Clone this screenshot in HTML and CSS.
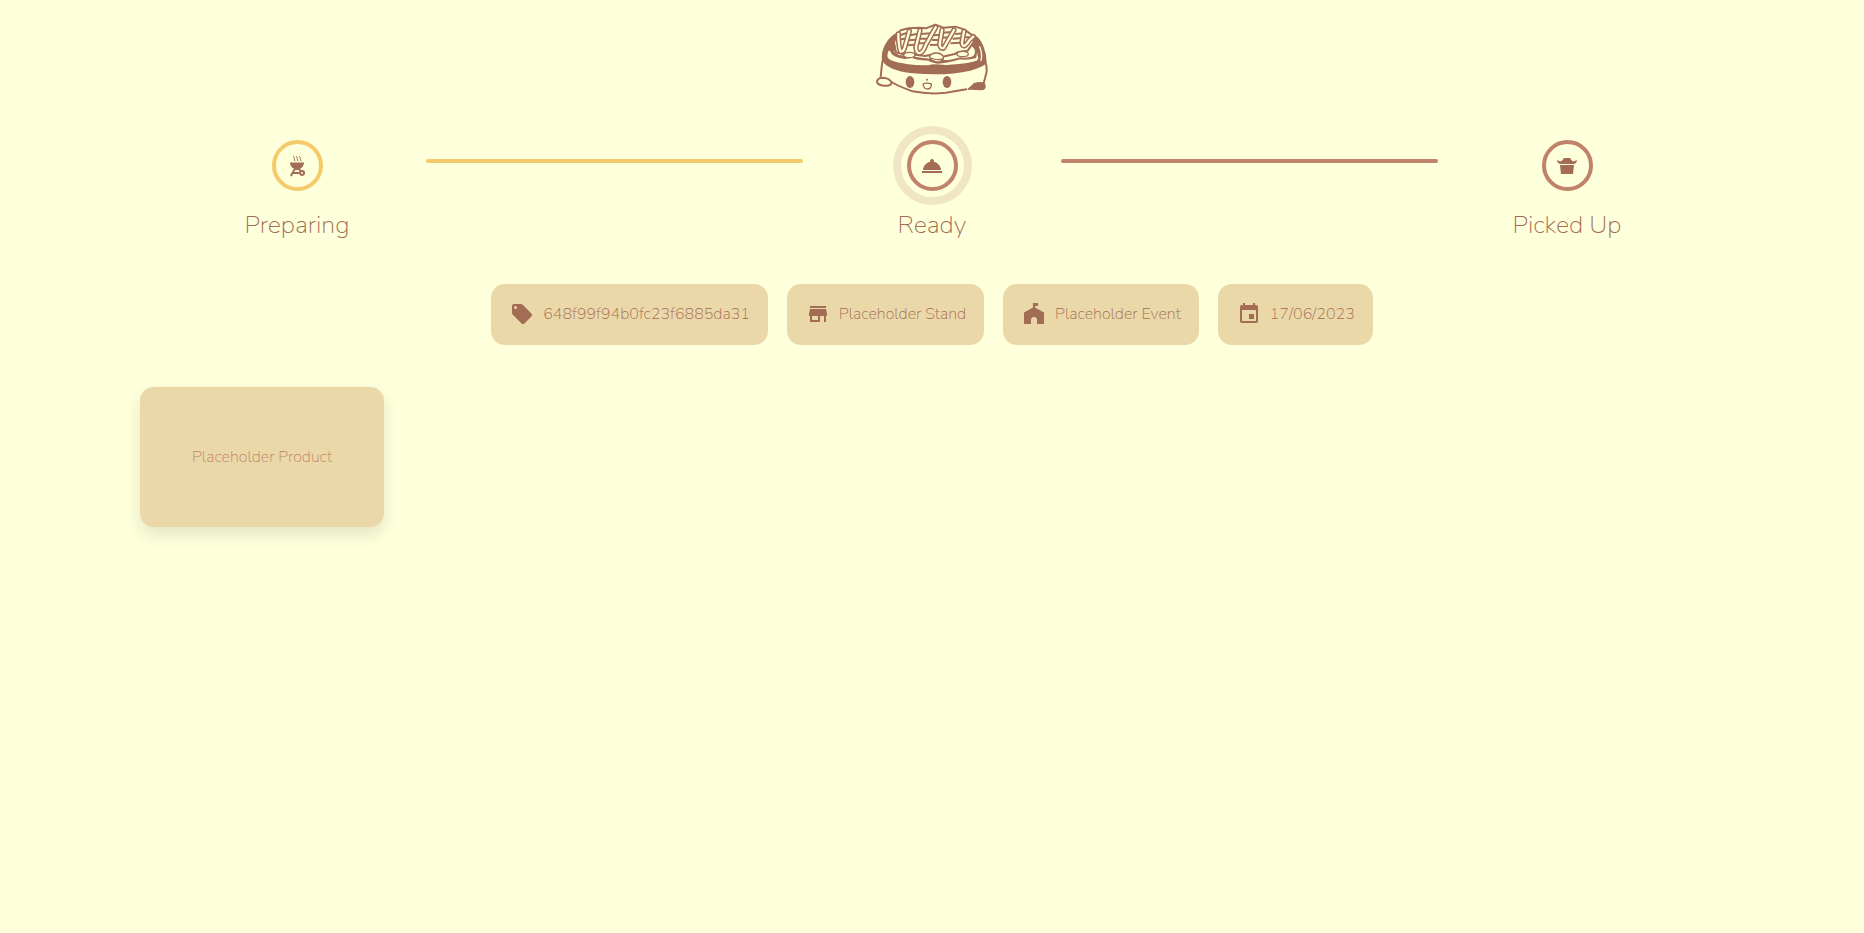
FILE: index.html
```html
<!DOCTYPE html>
<html lang="en">
<head>
<meta charset="utf-8">
<meta name="viewport" content="width=device-width, initial-scale=1">
<title>Order status</title>
<link rel="stylesheet" href="styles.css">
</head>
<body>
<header class="header">
  <svg class="logo" viewBox="30 33 336 216" role="img" aria-label="Okonomiyaki mascot">
    <g class="logo-line">
      <path d="M52 138C46 155 47 178 43 200M76 210Q100 224 140 238Q190 248 240 242L301 232M309 231L326 216M358 150C368 175 358 190 353 215"/>
      <path class="logo-fill" d="M92 66C66 80 50 110 50 138C52 162 95 176 140 181C200 186 265 184 312 173C340 165 355 158 359 150C359 122 345 82 325 72L318 98L328 110C334 128 326 140 300 141Q240 154 150 138L98 132L82 122L86 96Z"/>
      <path class="logo-cream" d="M66 112C59 128 58 141 72 147C98 158 150 165 190 162C210 154 228 166 250 161C290 158 315 156 334 148C345 140 338 122 331 112L328 136Q305 142 281 139Q240 152 215 152Q195 150 188 143Q150 142 138 134L116 138Q78 132 78 116Z"/>
      <path class="logo-cream" d="M84 92L92 67L104 55L128 49L160 47L180 49L208 38L232 47L268 44L294 52L325 74L322 92L305 116L278 120L266 126L230 134L208 125L178 132L149 128L112 127L90 121Z"/>
      <path d="M78 92Q66 124 94 131M332 92Q344 112 337 130"/>
      <path d="M106 68L120 64M106 82L116 80M132 70L152 66M128 85L148 83M124 100L146 98M164 66L196 64M160 80L190 80M158 94L184 94M206 70L224 68M200 84L222 84M194 99L220 98M232 62L254 60M230 77L246 76M270 66L292 64M262 80L288 78M256 94L284 92M300 76L310 76"/>
    </g>
    <g class="logo-sauce-edge">
      <path d="M97 66C97 88 99 106 104 119Q112 120 116 107L130 57M162 55L150 104Q150 125 162 123Q172 120 180 97L209 46M228 54L221 98Q224 112 233 108L264 54M294 58L288 91Q288 103 296 101Q304 96 310 85L322 74"/>
    </g>
    <g class="logo-sauce">
      <path d="M97 66C97 88 99 106 104 119Q112 120 116 107L130 57M162 55L150 104Q150 125 162 123Q172 120 180 97L209 46M228 54L221 98Q224 112 233 108L264 54M294 58L288 91Q288 103 296 101Q304 96 310 85L322 74"/>
    </g>
    <g class="logo-rim">
      <path d="M341 104Q350 126 345 146"/>
    </g>
    <g class="logo-egg">
      <ellipse cx="130" cy="129" rx="17" ry="8"/>
      <path d="M190 134Q196 122 214 123Q234 126 232 140Q228 150 212 150Q193 146 190 134Z"/>
      <ellipse cx="290" cy="126" rx="17" ry="8"/>
      <path d="M194 138Q212 146 230 141"/>
      <path class="logo-paw" d="M33 208Q35 198 50 197Q70 198 76 210Q78 220 64 221Q34 222 33 208Z"/>
      <path d="M171 216Q182 211 196 216Q197 231 184 231Q173 231 171 216Z"/>
    </g>
    <ellipse class="logo-solid" cx="132" cy="210" rx="13" ry="18"/>
    <ellipse class="logo-solid" cx="243" cy="210" rx="13" ry="18"/>
    <circle class="logo-solid" cx="183" cy="203" r="3"/>
    <path class="logo-solid" d="M305 232L318 222L324 213Q340 208 352 211Q360 216 359 226Q358 234 347 235L325 234Z"/>
  </svg>
</header>

<main class="page">
  <ol class="steps">
    <li class="step step-done">
      <span class="step-circle">
        <svg class="step-icon" viewBox="0 0 24 24" aria-hidden="true"><path d="M17 22a3 3 0 1 0-2.800-4H9.100l1.300-2.100h3.200l.9 1.400 1.600-1.100-.9-1.400C17.400 13.500 19 11.400 19 8.500H5c0 2.900 1.600 5.100 3.900 6.100L5.300 21a1 1 0 0 0 1.700 1l1.200-2h6A3 3 0 0 0 17 22zm0-4a1 1 0 1 1 0 2 1 1 0 0 1 0-2z"/><path class="steam" d="M8 2.200q1.800 1 1.300 2.500t1.200 2.600M11 2.200q1.800 1 1.300 2.500t1.200 2.600M14 2.200q1.800 1 1.300 2.500t1.200 2.600"/></svg>
      </span>
      <span class="step-label">Preparing</span>
    </li>
    <li class="bar bar-done" aria-hidden="true"></li>
    <li class="step step-current" aria-current="step">
      <span class="step-circle">
        <svg class="step-icon" viewBox="0 0 24 24" aria-hidden="true"><path d="M2 17h20v2H2zM13.840 7.790A2 2 0 1 0 10.160 7.790C6.250 8.600 3.270 11.930 3 16h18c-.270-4.070-3.250-7.400-7.160-8.210z"/></svg>
      </span>
      <span class="step-label">Ready</span>
    </li>
    <li class="bar" aria-hidden="true"></li>
    <li class="step">
      <span class="step-circle">
        <svg class="step-icon" viewBox="0 0 24 24" aria-hidden="true"><path d="M5 11h14l-1 9H6zM2.500 6l2 1.200h2L9 4h6l2.500 3.200h2l2-1.200.5 1.500-2.500 2.500H4.500L2 7.500z"/></svg>
      </span>
      <span class="step-label">Picked Up</span>
    </li>
  </ol>

  <ul class="chips">
    <li class="chip">
      <svg class="chip-icon" viewBox="0 0 24 24" aria-hidden="true"><path d="M21.410 11.580l-9-9A2 2 0 0 0 11 2H4a2 2 0 0 0-2 2v7c0 .550.220 1.050.590 1.420l9 9a2 2 0 0 0 2.820 0l7-7a2 2 0 0 0 0-2.840zM5.500 7a1.500 1.500 0 1 1 0-3 1.500 1.500 0 0 1 0 3z"/></svg>
      <span>648f99f94b0fc23f6885da31</span>
    </li>
    <li class="chip">
      <svg class="chip-icon" viewBox="0 0 24 24" aria-hidden="true"><path d="M20 4H4v2h16zM21 14v-2l-1-5H4l-1 5v2h1v6h10v-6h4v6h2v-6zM12 18H6v-4h6z"/></svg>
      <span>Placeholder Stand</span>
    </li>
    <li class="chip">
      <svg class="chip-icon" viewBox="0 0 24 24" aria-hidden="true"><path d="M13 5.500V4h3V1h-5v4.500L2 10.500V22h7v-4a3 3 0 0 1 6 0v4h7V10.500z"/></svg>
      <span>Placeholder Event</span>
    </li>
    <li class="chip">
      <svg class="chip-icon" viewBox="0 0 24 24" aria-hidden="true"><path d="M17 12h-5v5h5zM16 1v2H8V1H6v2H5a2 2 0 0 0-2 2v14a2 2 0 0 0 2 2h14a2 2 0 0 0 2-2V5a2 2 0 0 0-2-2h-1V1zM19 19H5V8h14z"/></svg>
      <span>17/06/2023</span>
    </li>
  </ul>

  <section class="products">
    <article class="product">Placeholder Product</article>
  </section>
</main>
</body>
</html>
```
FILE: styles.css
```css
:root {
  --cream: #feffdb;
  --sand: #ebd8a9;
  --brown: #a26c55;
  --clay: #c08269;
  --gold: #f3cb6b;
}

* {
  box-sizing: border-box;
}

body {
  margin: 0;
  min-height: 100vh;
  background: var(--cream);
  color: var(--brown);
  font-family: Nunito, Lato, "Open Sans", sans-serif;
  font-size: 16px;
  font-weight: 200;
  line-height: 24px;
}

ol,
ul {
  margin: 0;
  padding: 0;
  list-style: none;
}

svg {
  display: block;
  fill: var(--brown);
}

.header {
  display: flex;
  justify-content: center;
  padding-top: 23px;
}

.logo {
  width: 112px;
  height: 72px;
  overflow: visible;
}

.logo-line,
.logo-sauce-edge,
.logo-sauce,
.logo-rim,
.logo-egg {
  fill: none;
  stroke: var(--brown);
  stroke-width: 6;
  stroke-linecap: round;
  stroke-linejoin: round;
}

.logo-fill,
.logo-solid {
  fill: var(--brown);
}

.logo-cream {
  fill: var(--cream);
}

.logo-sauce-edge {
  stroke-width: 16;
}

.logo-sauce {
  stroke: var(--cream);
  stroke-width: 7;
}

.logo-rim {
  stroke: var(--cream);
  stroke-width: 4;
}

.logo-egg {
  fill: var(--cream);
  stroke-width: 4;
}

.logo-paw {
  stroke-width: 6;
}

.page {
  padding: 45px 140px;
}

.steps {
  display: grid;
  grid-template-columns: 258fr 377fr 258fr 377fr 258fr;
  padding: 0 28px;
}

.step {
  display: flex;
  flex-direction: column;
  align-items: center;
  gap: 16px;
}

.step-circle {
  display: grid;
  place-items: center;
  width: 51px;
  height: 51px;
  border: 4px solid var(--clay);
  border-radius: 50%;
}

.step-done .step-circle {
  border-color: var(--gold);
}

.step-current .step-circle {
  outline: 8px solid #f0e5c4;
  outline-offset: 6px;
}

.step-icon {
  width: 24px;
  height: 24px;
}

.steam {
  fill: none;
  stroke: var(--brown);
  stroke-width: 1;
}

.step-label {
  font-size: 25px;
  line-height: 36px;
}

.bar {
  height: 4px;
  margin-top: 19px;
  border-radius: 2px;
  background: var(--clay);
}

.bar-done {
  background: var(--gold);
}

.chips {
  display: flex;
  flex-wrap: wrap;
  justify-content: center;
  gap: 19px;
  margin-top: 41px;
}

.chip {
  display: flex;
  align-items: center;
  gap: 9px;
  padding: 18px 18px 19px 19px;
  border-radius: 14px;
  background: var(--sand);
}

.chip-icon {
  width: 24px;
  height: 24px;
}

.products {
  display: grid;
  grid-template-columns: repeat(auto-fill, 244px);
  gap: 24px;
  margin-top: 42px;
}

.product {
  display: grid;
  place-items: center;
  min-height: 140px;
  border-radius: 14px;
  background: var(--sand);
  color: var(--clay);
  box-shadow: 0 8px 16px rgb(0 0 0 / 10%);
}
```
